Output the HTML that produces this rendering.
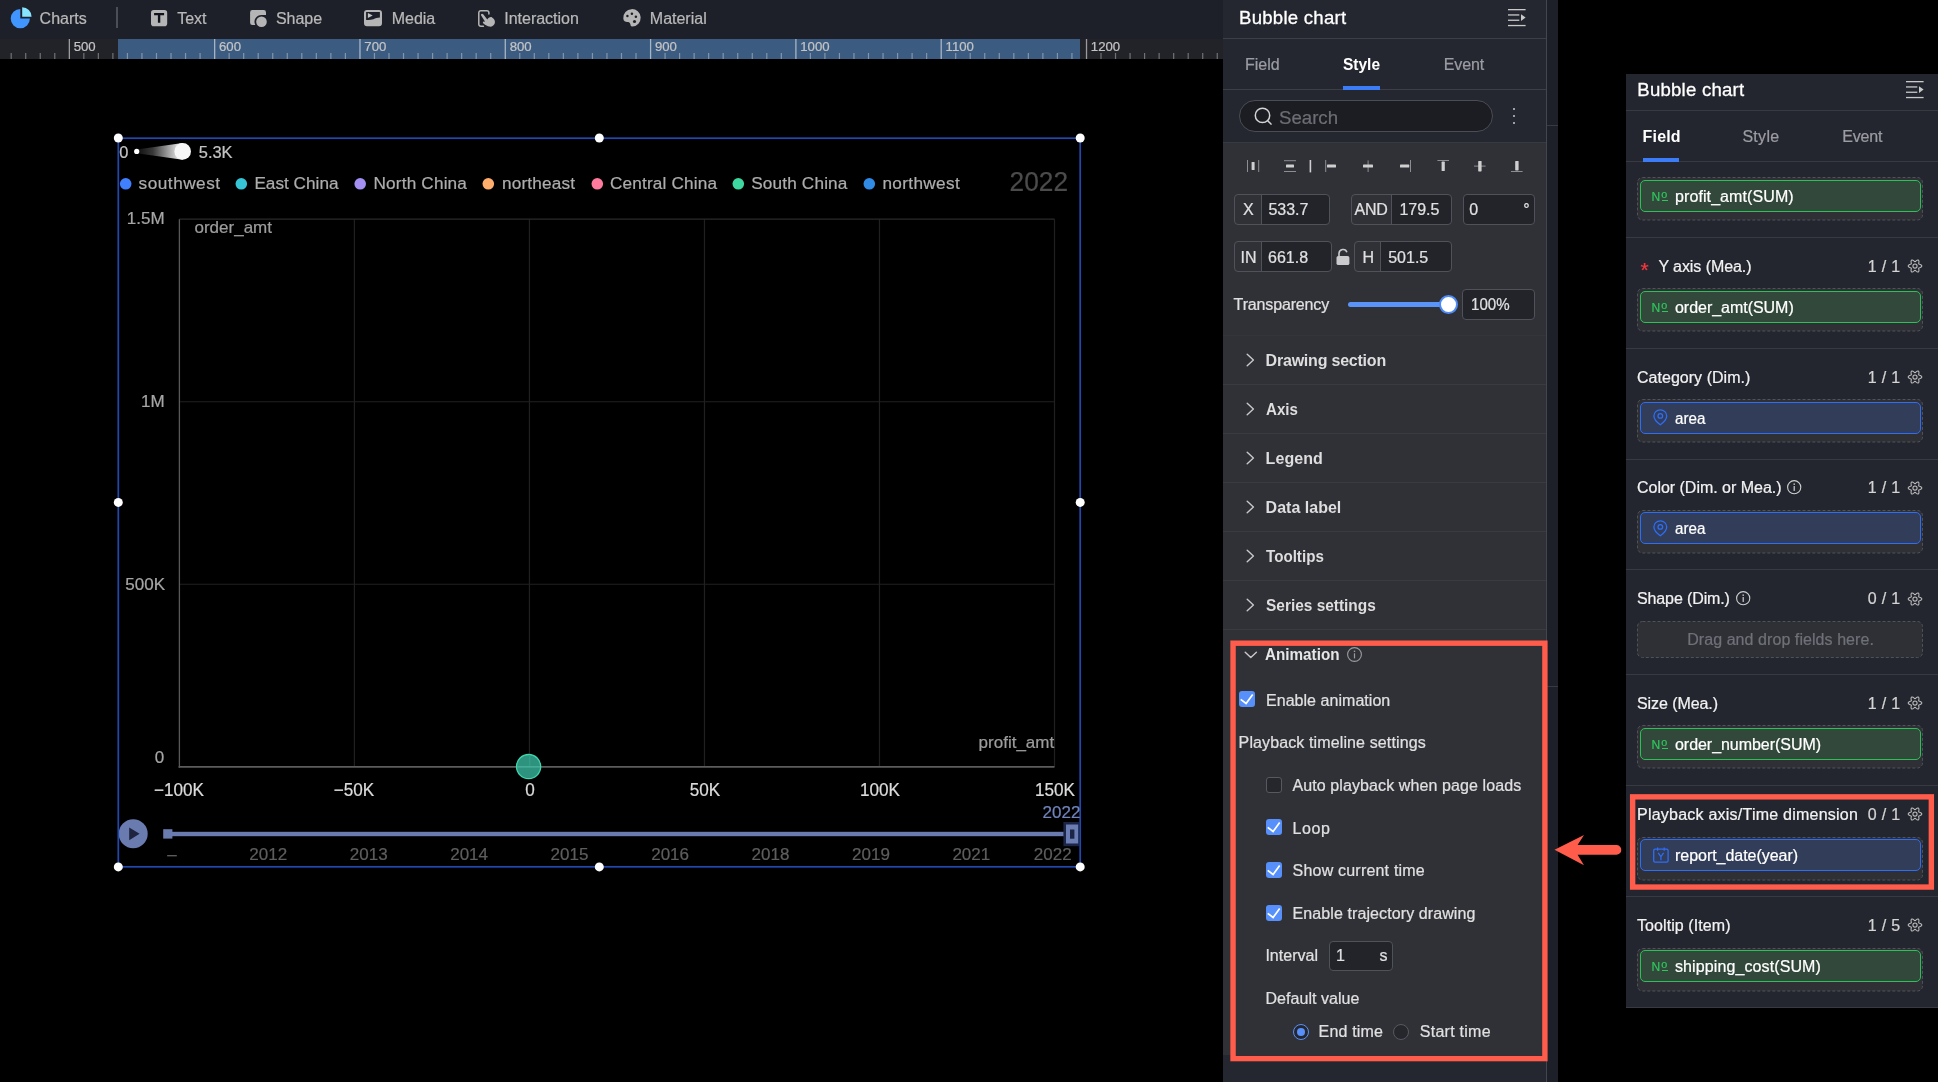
<!DOCTYPE html>
<html><head><meta charset="utf-8"><title>Bubble chart</title>
<style>
html,body{margin:0;padding:0;background:#000;}
body{width:1938px;height:1082px;position:relative;overflow:hidden;font-family:"Liberation Sans",sans-serif;}
.a{position:absolute;box-sizing:border-box;}
.t{position:absolute;line-height:1;white-space:nowrap;-webkit-text-stroke-width:.22px;}
svg{overflow:visible;}
#root{position:absolute;left:0;top:0;width:1938px;height:1082px;will-change:transform;}
</style></head><body><div id="root">
<div class="a" style="left:0.00px;top:0.00px;width:1223.00px;height:39.00px;background:#1e2029;"></div>
<svg class="a" style="left:9.00px;top:6.00px;" width="24" height="24" viewBox="0 0 24 24"><path d="M11.3 3.0 A9.6 9.6 0 1 0 20.9 12.6 L11.3 12.6 Z" fill="#4095ff"/>
<path d="M13.2 1.3 A9.4 9.4 0 0 1 22.6 10.7 L13.2 10.7 Z" fill="#86e4ff"/></svg>
<span class="t" style="top:11.00px;font-size:16px;color:#b9b9b9;left:39.60px;">Charts</span>
<div class="a" style="left:116.00px;top:7.00px;width:2.00px;height:21.00px;background:#4c4e56;"></div>
<svg class="a" style="left:150.80px;top:9.90px;" width="16.2" height="16.2" viewBox="0 0 16.2 16.2"><rect x="0" y="0" width="16.2" height="16.2" rx="2.8" fill="#b5b5b5"/>
<path d="M3.1 3.1H13.1V5.2H9.3V12.8H6.9V5.2H3.1Z" fill="#10131b"/></svg>
<span class="t" style="top:11.00px;font-size:16px;color:#b9b9b9;left:177.20px;">Text</span>
<svg class="a" style="left:249.50px;top:9.50px;" width="18" height="18" viewBox="0 0 18 18"><path d="M2.4 0.1H13.7A2.3 2.3 0 0 1 16 2.4V4.9H11.9A7 7 0 0 0 5.3 15.1H2.4A2.3 2.3 0 0 1 0.1 12.8V2.4A2.3 2.3 0 0 1 2.4 0.1Z" fill="#b5b5b5"/>
<circle cx="11.5" cy="11.75" r="5.3" fill="#b5b5b5"/></svg>
<span class="t" style="top:11.00px;font-size:16px;color:#b9b9b9;left:275.90px;">Shape</span>
<svg class="a" style="left:364.00px;top:9.90px;" width="18" height="16.2" viewBox="0 0 18 16.2"><path fill-rule="evenodd" d="M3 0H15A3 3 0 0 1 18 3V13.2A3 3 0 0 1 15 16.2H3A3 3 0 0 1 0 13.2V3A3 3 0 0 1 3 0ZM2.1 2.1H15.9V7.6C13.4 7.6 11.4 8.4 9.4 9.2C7.2 10 4.4 10.1 2.1 9.9Z" fill="#b5b5b5"/>
<path d="M3.9 3.0L8.7 5.6L3.9 8.1Z" fill="#c4c4c4"/></svg>
<span class="t" style="top:11.00px;font-size:16px;color:#b9b9b9;left:391.70px;">Media</span>
<svg class="a" style="left:478.00px;top:9.50px;" width="18" height="18" viewBox="0 0 18 18"><path d="M10.9 4.1V2.7A2 2 0 0 0 8.9 0.75H2.8A2 2 0 0 0 0.8 2.75V14.2A2 2 0 0 0 2.8 16.2H5.4" fill="none" stroke="#b5b5b5" stroke-width="1.5" stroke-linecap="round"/>
<path d="M3.0 5.3C2.5 4.0 4.2 3.0 5.2 4.2L9.3 9.5C10.3 7.6 12.5 6.6 14.1 7.4C16.5 8.6 17.5 11.4 16.7 13.6C15.9 16.0 13.5 17.0 11.3 16.6C9.6 16.3 7.6 15.1 5.4 13.4C4.4 12.6 4.8 11.5 5.8 11.5L7.1 11.7Z" fill="#b5b5b5"/></svg>
<span class="t" style="top:11.00px;font-size:16px;color:#b9b9b9;left:504.20px;">Interaction</span>
<svg class="a" style="left:623.00px;top:9.00px;" width="18" height="18" viewBox="0 0 18 18"><path d="M0.3 9.4A8.7 8.7 0 1 1 9.4 17.5C7.6 17.6 7.6 16.4 7.4 15.2C7.1 13.4 5.8 12.9 4.2 12.9C2.4 12.9 0.5 12.2 0.3 9.4Z" fill="#b5b5b5"/>
<circle cx="4.4" cy="7.0" r="1.2" fill="#1e2029"/><circle cx="8.9" cy="4.7" r="1.25" fill="#1e2029"/><circle cx="12.9" cy="7.7" r="1.25" fill="#1e2029"/><circle cx="11.5" cy="12.5" r="1.55" fill="#1e2029"/></svg>
<span class="t" style="top:11.00px;font-size:16px;color:#b9b9b9;left:649.80px;">Material</span>
<div class="a" style="left:0.00px;top:39.00px;width:1223.00px;height:20.00px;background:#222328;"></div>
<div class="a" style="left:118.00px;top:39.00px;width:962.00px;height:20.00px;background:#3b5b80;"></div>
<svg class="a" style="left:0.00px;top:39.00px;" width="1223" height="20" viewBox="0 0 1223 20"><rect x="10.58" y="14" width="1.2" height="6" fill="#fff" fill-opacity=".36"/><rect x="25.11" y="14" width="1.2" height="6" fill="#fff" fill-opacity=".36"/><rect x="39.64" y="14" width="1.2" height="6" fill="#fff" fill-opacity=".36"/><rect x="54.17" y="14" width="1.2" height="6" fill="#fff" fill-opacity=".36"/><rect x="68.70" y="0" width="1.3" height="20" fill="#fff" fill-opacity=".55"/><rect x="83.23" y="14" width="1.2" height="6" fill="#fff" fill-opacity=".36"/><rect x="97.76" y="14" width="1.2" height="6" fill="#fff" fill-opacity=".36"/><rect x="112.29" y="14" width="1.2" height="6" fill="#fff" fill-opacity=".36"/><rect x="126.82" y="14" width="1.2" height="6" fill="#fff" fill-opacity=".36"/><rect x="141.35" y="14" width="1.2" height="6" fill="#fff" fill-opacity=".36"/><rect x="155.89" y="14" width="1.2" height="6" fill="#fff" fill-opacity=".36"/><rect x="170.42" y="14" width="1.2" height="6" fill="#fff" fill-opacity=".36"/><rect x="184.95" y="14" width="1.2" height="6" fill="#fff" fill-opacity=".36"/><rect x="199.48" y="14" width="1.2" height="6" fill="#fff" fill-opacity=".36"/><rect x="214.01" y="0" width="1.3" height="20" fill="#fff" fill-opacity=".55"/><rect x="228.54" y="14" width="1.2" height="6" fill="#fff" fill-opacity=".36"/><rect x="243.07" y="14" width="1.2" height="6" fill="#fff" fill-opacity=".36"/><rect x="257.60" y="14" width="1.2" height="6" fill="#fff" fill-opacity=".36"/><rect x="272.13" y="14" width="1.2" height="6" fill="#fff" fill-opacity=".36"/><rect x="286.66" y="14" width="1.2" height="6" fill="#fff" fill-opacity=".36"/><rect x="301.20" y="14" width="1.2" height="6" fill="#fff" fill-opacity=".36"/><rect x="315.73" y="14" width="1.2" height="6" fill="#fff" fill-opacity=".36"/><rect x="330.26" y="14" width="1.2" height="6" fill="#fff" fill-opacity=".36"/><rect x="344.79" y="14" width="1.2" height="6" fill="#fff" fill-opacity=".36"/><rect x="359.32" y="0" width="1.3" height="20" fill="#fff" fill-opacity=".55"/><rect x="373.85" y="14" width="1.2" height="6" fill="#fff" fill-opacity=".36"/><rect x="388.38" y="14" width="1.2" height="6" fill="#fff" fill-opacity=".36"/><rect x="402.91" y="14" width="1.2" height="6" fill="#fff" fill-opacity=".36"/><rect x="417.44" y="14" width="1.2" height="6" fill="#fff" fill-opacity=".36"/><rect x="431.97" y="14" width="1.2" height="6" fill="#fff" fill-opacity=".36"/><rect x="446.51" y="14" width="1.2" height="6" fill="#fff" fill-opacity=".36"/><rect x="461.04" y="14" width="1.2" height="6" fill="#fff" fill-opacity=".36"/><rect x="475.57" y="14" width="1.2" height="6" fill="#fff" fill-opacity=".36"/><rect x="490.10" y="14" width="1.2" height="6" fill="#fff" fill-opacity=".36"/><rect x="504.63" y="0" width="1.3" height="20" fill="#fff" fill-opacity=".55"/><rect x="519.16" y="14" width="1.2" height="6" fill="#fff" fill-opacity=".36"/><rect x="533.69" y="14" width="1.2" height="6" fill="#fff" fill-opacity=".36"/><rect x="548.22" y="14" width="1.2" height="6" fill="#fff" fill-opacity=".36"/><rect x="562.75" y="14" width="1.2" height="6" fill="#fff" fill-opacity=".36"/><rect x="577.28" y="14" width="1.2" height="6" fill="#fff" fill-opacity=".36"/><rect x="591.82" y="14" width="1.2" height="6" fill="#fff" fill-opacity=".36"/><rect x="606.35" y="14" width="1.2" height="6" fill="#fff" fill-opacity=".36"/><rect x="620.88" y="14" width="1.2" height="6" fill="#fff" fill-opacity=".36"/><rect x="635.41" y="14" width="1.2" height="6" fill="#fff" fill-opacity=".36"/><rect x="649.94" y="0" width="1.3" height="20" fill="#fff" fill-opacity=".55"/><rect x="664.47" y="14" width="1.2" height="6" fill="#fff" fill-opacity=".36"/><rect x="679.00" y="14" width="1.2" height="6" fill="#fff" fill-opacity=".36"/><rect x="693.53" y="14" width="1.2" height="6" fill="#fff" fill-opacity=".36"/><rect x="708.06" y="14" width="1.2" height="6" fill="#fff" fill-opacity=".36"/><rect x="722.59" y="14" width="1.2" height="6" fill="#fff" fill-opacity=".36"/><rect x="737.13" y="14" width="1.2" height="6" fill="#fff" fill-opacity=".36"/><rect x="751.66" y="14" width="1.2" height="6" fill="#fff" fill-opacity=".36"/><rect x="766.19" y="14" width="1.2" height="6" fill="#fff" fill-opacity=".36"/><rect x="780.72" y="14" width="1.2" height="6" fill="#fff" fill-opacity=".36"/><rect x="795.25" y="0" width="1.3" height="20" fill="#fff" fill-opacity=".55"/><rect x="809.78" y="14" width="1.2" height="6" fill="#fff" fill-opacity=".36"/><rect x="824.31" y="14" width="1.2" height="6" fill="#fff" fill-opacity=".36"/><rect x="838.84" y="14" width="1.2" height="6" fill="#fff" fill-opacity=".36"/><rect x="853.37" y="14" width="1.2" height="6" fill="#fff" fill-opacity=".36"/><rect x="867.90" y="14" width="1.2" height="6" fill="#fff" fill-opacity=".36"/><rect x="882.44" y="14" width="1.2" height="6" fill="#fff" fill-opacity=".36"/><rect x="896.97" y="14" width="1.2" height="6" fill="#fff" fill-opacity=".36"/><rect x="911.50" y="14" width="1.2" height="6" fill="#fff" fill-opacity=".36"/><rect x="926.03" y="14" width="1.2" height="6" fill="#fff" fill-opacity=".36"/><rect x="940.56" y="0" width="1.3" height="20" fill="#fff" fill-opacity=".55"/><rect x="955.09" y="14" width="1.2" height="6" fill="#fff" fill-opacity=".36"/><rect x="969.62" y="14" width="1.2" height="6" fill="#fff" fill-opacity=".36"/><rect x="984.15" y="14" width="1.2" height="6" fill="#fff" fill-opacity=".36"/><rect x="998.68" y="14" width="1.2" height="6" fill="#fff" fill-opacity=".36"/><rect x="1013.21" y="14" width="1.2" height="6" fill="#fff" fill-opacity=".36"/><rect x="1027.75" y="14" width="1.2" height="6" fill="#fff" fill-opacity=".36"/><rect x="1042.28" y="14" width="1.2" height="6" fill="#fff" fill-opacity=".36"/><rect x="1056.81" y="14" width="1.2" height="6" fill="#fff" fill-opacity=".36"/><rect x="1071.34" y="14" width="1.2" height="6" fill="#fff" fill-opacity=".36"/><rect x="1085.87" y="0" width="1.3" height="20" fill="#fff" fill-opacity=".55"/><rect x="1100.40" y="14" width="1.2" height="6" fill="#fff" fill-opacity=".36"/><rect x="1114.93" y="14" width="1.2" height="6" fill="#fff" fill-opacity=".36"/><rect x="1129.46" y="14" width="1.2" height="6" fill="#fff" fill-opacity=".36"/><rect x="1143.99" y="14" width="1.2" height="6" fill="#fff" fill-opacity=".36"/><rect x="1158.53" y="14" width="1.2" height="6" fill="#fff" fill-opacity=".36"/><rect x="1173.06" y="14" width="1.2" height="6" fill="#fff" fill-opacity=".36"/><rect x="1187.59" y="14" width="1.2" height="6" fill="#fff" fill-opacity=".36"/><rect x="1202.12" y="14" width="1.2" height="6" fill="#fff" fill-opacity=".36"/><rect x="1216.65" y="14" width="1.2" height="6" fill="#fff" fill-opacity=".36"/></svg>
<span class="t" style="top:40.00px;font-size:13.2px;color:#c4c4c4;left:73.70px;">500</span>
<span class="t" style="top:40.00px;font-size:13.2px;color:#c4c4c4;left:219.01px;">600</span>
<span class="t" style="top:40.00px;font-size:13.2px;color:#c4c4c4;left:364.32px;">700</span>
<span class="t" style="top:40.00px;font-size:13.2px;color:#c4c4c4;left:509.63px;">800</span>
<span class="t" style="top:40.00px;font-size:13.2px;color:#c4c4c4;left:654.94px;">900</span>
<span class="t" style="top:40.00px;font-size:13.2px;color:#c4c4c4;left:800.25px;">1000</span>
<span class="t" style="top:40.00px;font-size:13.2px;color:#c4c4c4;left:945.56px;">1100</span>
<span class="t" style="top:40.00px;font-size:13.2px;color:#c4c4c4;left:1090.87px;">1200</span>
<svg class="a" style="left:0.00px;top:0.00px;" width="1223" height="1082" viewBox="0 0 1223 1082"><line x1="354.42" y1="219.2" x2="354.42" y2="766.8" stroke="#202020" stroke-width="1.2"/><line x1="529.44" y1="219.2" x2="529.44" y2="766.8" stroke="#202020" stroke-width="1.2"/><line x1="704.46" y1="219.2" x2="704.46" y2="766.8" stroke="#202020" stroke-width="1.2"/><line x1="879.48" y1="219.2" x2="879.48" y2="766.8" stroke="#202020" stroke-width="1.2"/><line x1="1054.50" y1="219.2" x2="1054.50" y2="766.8" stroke="#202020" stroke-width="1.2"/><line x1="179.4" y1="219.20" x2="1054.5" y2="219.20" stroke="#2a2a2a" stroke-width="1.2"/><line x1="179.4" y1="401.73" x2="1054.5" y2="401.73" stroke="#212121" stroke-width="1.2"/><line x1="179.4" y1="584.27" x2="1054.5" y2="584.27" stroke="#212121" stroke-width="1.2"/><line x1="179.4" y1="219.2" x2="179.4" y2="767.8" stroke="#585858" stroke-width="1.3"/><line x1="178.6" y1="766.8" x2="1054.5" y2="766.8" stroke="#5c5c5c" stroke-width="1.8"/><circle cx="528.6" cy="766.6" r="12.1" fill="#2e9782" fill-opacity=".97" stroke="#3fd6ad" stroke-width="1.3"/><line x1="517" y1="766.8" x2="540" y2="766.8" stroke="#45ad97" stroke-width="1.6"/><line x1="529.7" y1="755" x2="529.7" y2="766" stroke="#33a08a" stroke-width="1.2"/><defs><linearGradient id="wg" x1="0" x2="1" y1="0" y2="0"><stop offset="0" stop-color="#fff" stop-opacity=".05"/><stop offset=".35" stop-color="#fff" stop-opacity=".22"/><stop offset="1" stop-color="#fff" stop-opacity="1"/></linearGradient></defs>
<path d="M136.7 149.6L182.7 143.1V159.7L136.7 153.2Z" fill="url(#wg)"/>
<circle cx="136.7" cy="151.4" r="2.6" fill="#fff"/><circle cx="182.7" cy="151.4" r="8.3" fill="#f7f7f7"/><circle cx="125.7" cy="183.8" r="5.8" fill="#4080ff"/><circle cx="241.3" cy="183.8" r="5.8" fill="#36c5d6"/><circle cx="360.2" cy="183.8" r="5.8" fill="#a48ff2"/><circle cx="488.3" cy="183.8" r="5.8" fill="#ffae6b"/><circle cx="597.3" cy="183.8" r="5.8" fill="#ff7a9c"/><circle cx="738.3" cy="183.8" r="5.8" fill="#3dd8a0"/><circle cx="869.3" cy="183.8" r="5.8" fill="#2f8be6"/><circle cx="133.2" cy="833.8" r="14.5" fill="#6a7bb0"/><path d="M129.2 827.4L139.6 833.8L129.2 840.2Z" fill="#1f2540"/><rect x="163.2" y="829.2" width="9.2" height="9.4" fill="#6a7bb0"/><rect x="171" y="831.8" width="894" height="4.4" fill="#6a7bb0"/><rect x="1063.4" y="822" width="15.8" height="24.2" fill="#1c2545"/><rect x="1066" y="824.5" width="12.2" height="19" fill="#6b7db2"/><rect x="1070" y="829.5" width="4.4" height="9.2" fill="#1c2545"/><rect x="118.3" y="138.2" width="961.9" height="728.6" fill="none" stroke="#2149ad" stroke-width="1.7"/><circle cx="118.3" cy="138" r="4.5" fill="#fff"/><circle cx="599.3" cy="138" r="4.5" fill="#fff"/><circle cx="1080.2" cy="138" r="4.5" fill="#fff"/><circle cx="118.3" cy="502.4" r="4.5" fill="#fff"/><circle cx="1080.2" cy="502.4" r="4.5" fill="#fff"/><circle cx="118.3" cy="866.9" r="4.5" fill="#fff"/><circle cx="599.3" cy="866.9" r="4.5" fill="#fff"/><circle cx="1080.2" cy="866.9" r="4.5" fill="#fff"/></svg>
<span class="t" style="top:144.00px;font-size:16.4px;color:#c4c4c4;left:119.30px;">0</span>
<span class="t" style="top:144.00px;font-size:16.4px;color:#c4c4c4;left:198.80px;">5.3K</span>
<span class="t" style="top:175.00px;font-size:17.2px;color:#adadad;left:138.60px;letter-spacing:0.512px;">southwest</span>
<span class="t" style="top:175.00px;font-size:17.2px;color:#adadad;left:254.40px;letter-spacing:0.011px;">East China</span>
<span class="t" style="top:175.00px;font-size:17.2px;color:#adadad;left:373.50px;letter-spacing:0.17px;">North China</span>
<span class="t" style="top:175.00px;font-size:17.2px;color:#adadad;left:501.90px;letter-spacing:0.188px;">northeast</span>
<span class="t" style="top:175.00px;font-size:17.2px;color:#adadad;left:610.00px;letter-spacing:0.167px;">Central China</span>
<span class="t" style="top:175.00px;font-size:17.2px;color:#adadad;left:751.20px;letter-spacing:0.16px;">South China</span>
<span class="t" style="top:175.00px;font-size:17.2px;color:#adadad;left:882.40px;letter-spacing:0.35px;">northwest</span>
<span class="t" style="top:169.00px;font-size:27px;color:#4b4b4b;right:870.10px;transform:scaleX(0.9741);transform-origin:right center;">2022</span>
<span class="t" style="top:210.00px;font-size:17px;color:#a6a6a6;right:1773.40px;">1.5M</span>
<span class="t" style="top:393.00px;font-size:17px;color:#a6a6a6;right:1773.40px;">1M</span>
<span class="t" style="top:576.00px;font-size:17px;color:#a6a6a6;right:1773.00px;">500K</span>
<span class="t" style="top:749.00px;font-size:17px;color:#a6a6a6;right:1773.80px;">0</span>
<span class="t" style="top:219.00px;font-size:17px;color:#9d9d9d;left:194.50px;">order_amt</span>
<span class="t" style="top:734.00px;font-size:17px;color:#9d9d9d;right:883.80px;">profit_amt</span>
<span class="t" style="top:781.00px;font-size:18px;color:#dcdcdc;left:179.40px;transform:translateX(-50%);transform:translateX(-50%) scaleX(.95);">−100K</span>
<span class="t" style="top:781.00px;font-size:18px;color:#dcdcdc;left:354.40px;transform:translateX(-50%);transform:translateX(-50%) scaleX(.95);">−50K</span>
<span class="t" style="top:781.00px;font-size:18px;color:#dcdcdc;left:529.60px;transform:translateX(-50%);transform:translateX(-50%) scaleX(.95);">0</span>
<span class="t" style="top:781.00px;font-size:18px;color:#dcdcdc;left:704.60px;transform:translateX(-50%);transform:translateX(-50%) scaleX(.95);">50K</span>
<span class="t" style="top:781.00px;font-size:18px;color:#dcdcdc;left:879.60px;transform:translateX(-50%);transform:translateX(-50%) scaleX(.95);">100K</span>
<span class="t" style="top:781.00px;font-size:18px;color:#dcdcdc;left:1055.20px;transform:translateX(-50%);transform:translateX(-50%) scaleX(.95);">150K</span>
<span class="t" style="top:804.00px;font-size:17px;color:#7184bd;right:857.60px;">2022</span>
<span class="t" style="top:846.00px;font-size:17px;color:#5e5e5e;left:172.00px;transform:translateX(-50%);">–</span>
<span class="t" style="top:846.00px;font-size:17px;color:#5e5e5e;left:268.20px;transform:translateX(-50%);">2012</span>
<span class="t" style="top:846.00px;font-size:17px;color:#5e5e5e;left:368.70px;transform:translateX(-50%);">2013</span>
<span class="t" style="top:846.00px;font-size:17px;color:#5e5e5e;left:469.10px;transform:translateX(-50%);">2014</span>
<span class="t" style="top:846.00px;font-size:17px;color:#5e5e5e;left:569.50px;transform:translateX(-50%);">2015</span>
<span class="t" style="top:846.00px;font-size:17px;color:#5e5e5e;left:670.10px;transform:translateX(-50%);">2016</span>
<span class="t" style="top:846.00px;font-size:17px;color:#5e5e5e;left:770.50px;transform:translateX(-50%);">2018</span>
<span class="t" style="top:846.00px;font-size:17px;color:#5e5e5e;left:871.00px;transform:translateX(-50%);">2019</span>
<span class="t" style="top:846.00px;font-size:17px;color:#5e5e5e;left:971.30px;transform:translateX(-50%);">2021</span>
<span class="t" style="top:846.00px;font-size:17px;color:#5e5e5e;right:866.40px;">2022</span>
<div class="a" style="left:1223.00px;top:0.00px;width:324.00px;height:142.00px;background:#252730;"></div>
<div class="a" style="left:1223.00px;top:142.00px;width:324.00px;height:913.00px;background:#303137;"></div>
<div class="a" style="left:1223.00px;top:1055.00px;width:324.00px;height:27.00px;background:#252730;"></div>
<div class="a" style="left:1547.00px;top:0.00px;width:11.00px;height:1082.00px;background:#1e2029;"></div>
<div class="a" style="left:1547.00px;top:125.00px;width:11.00px;height:1.00px;background:#383a42;"></div>
<div class="a" style="left:1547.00px;top:686.00px;width:11.00px;height:1.00px;background:#383a42;"></div>
<div class="a" style="left:1223.00px;top:38.00px;width:324.00px;height:1.00px;background:#3d3f47;"></div>
<div class="a" style="left:1223.00px;top:89.00px;width:324.00px;height:1.00px;background:#3d3f47;"></div>
<div class="a" style="left:1223.00px;top:141.50px;width:324.00px;height:1.00px;background:#383a41;"></div>
<div class="a" style="left:1546.00px;top:0.00px;width:1.00px;height:1082.00px;background:#44464e;"></div>
<span class="t" style="top:9.00px;font-size:18.6px;color:#fff;left:1239.00px;letter-spacing:0.245px;-webkit-text-stroke:.3px #fff;">Bubble chart</span>
<svg class="a" style="left:1508.00px;top:9.10px;" width="18" height="18" viewBox="0 0 18 18"><g fill="#c9c9c9"><rect x="0" y="0" width="17.6" height="1.3"/><rect x="0" y="5.3" width="11.3" height="1.3"/><rect x="0" y="10.6" width="11.3" height="1.3"/><rect x="0" y="15.9" width="17.6" height="1.3"/><path d="M13 5.2L17.6 8.6L13 12Z"/></g></svg>
<span class="t" style="top:57.00px;font-size:16px;color:#9c9da3;left:1245.00px;letter-spacing:0.0px;">Field</span>
<span class="t" style="top:57.00px;font-size:16px;color:#fff;left:1342.60px;font-weight:bold;-webkit-text-stroke-width:0;transform:scaleX(0.9684);transform-origin:left center;">Style</span>
<span class="t" style="top:57.00px;font-size:16px;color:#9c9da3;left:1443.80px;letter-spacing:-0.125px;">Event</span>
<div class="a" style="left:1343.00px;top:86.00px;width:37.00px;height:4.00px;background:#3c7cf6;"></div>
<div class="a" style="left:1239.00px;top:100.00px;width:254.00px;height:32.00px;background:#1c1d23;border:1px solid #4b4d55;border-radius:16px;"></div>
<svg class="a" style="left:1253.50px;top:106.80px;" width="18" height="18" viewBox="0 0 18 18"><circle cx="8.5" cy="8.4" r="7.2" fill="none" stroke="#d4d4d4" stroke-width="1.5"/><path d="M13.7 13.7L17.0 17.1" stroke="#d4d4d4" stroke-width="1.5" stroke-linecap="round"/></svg>
<span class="t" style="top:108.00px;font-size:19.2px;color:#6c6e75;left:1279.00px;transform:scaleX(0.9712);transform-origin:left center;">Search</span>
<div class="a" style="left:1512.60px;top:107.90px;width:2.20px;height:2.20px;background:#c9c9c9;border-radius:50%;"></div>
<div class="a" style="left:1512.60px;top:114.90px;width:2.20px;height:2.20px;background:#c9c9c9;border-radius:50%;"></div>
<div class="a" style="left:1512.60px;top:121.90px;width:2.20px;height:2.20px;background:#c9c9c9;border-radius:50%;"></div>
<svg class="a" style="left:0.00px;top:0.00px;" width="1938" height="200" viewBox="0 0 1938 200"><rect x="1247" y="160" width="1" height="12" fill="#8d8e93"/><rect x="1258.2" y="160" width="1" height="12" fill="#8d8e93"/><rect x="1251.6" y="162" width="3" height="8" rx=".6" fill="#cfcfcf"/><rect x="1284" y="160.2" width="12" height="1" fill="#8d8e93"/><rect x="1284" y="171" width="12" height="1" fill="#8d8e93"/><rect x="1286" y="164.6" width="8" height="3" rx=".6" fill="#cfcfcf"/><rect x="1309.6" y="160" width="1.6" height="12.4" fill="#cfcfcf"/><rect x="1325.2" y="160" width="1" height="12" fill="#8d8e93"/><rect x="1327" y="164.6" width="9" height="3" rx=".6" fill="#cfcfcf"/><rect x="1367.6" y="160.4" width="1" height="11.6" fill="#8d8e93"/><rect x="1363" y="164.6" width="10" height="3" rx=".6" fill="#cfcfcf"/><rect x="1410" y="160" width="1" height="12" fill="#8d8e93"/><rect x="1400" y="164.6" width="9.2" height="3" rx=".6" fill="#cfcfcf"/><rect x="1437.4" y="160" width="11.6" height="1" fill="#8d8e93"/><rect x="1441.6" y="161.6" width="3.2" height="9.4" rx=".6" fill="#cfcfcf"/><rect x="1474" y="165.6" width="11.6" height="1" fill="#8d8e93"/><rect x="1478.2" y="161" width="3.4" height="10.4" rx=".6" fill="#cfcfcf"/><rect x="1511" y="171" width="11.6" height="1" fill="#8d8e93"/><rect x="1515.2" y="161" width="3.4" height="9.4" rx=".6" fill="#cfcfcf"/></svg>
<div class="a" style="left:1234.00px;top:194.00px;width:96.00px;height:31.00px;border:1px solid #50525a;border-radius:4px;background:linear-gradient(to right,#303137 26.40000000000009px,#50525a 26.40000000000009px,#50525a 27.40000000000009px,#232429 27.40000000000009px);"></div>
<span class="t" style="top:202.00px;font-size:16px;color:#e0e0e0;left:1243.00px;">X</span>
<span class="t" style="top:202.00px;font-size:16px;color:#e0e0e0;left:1268.40px;">533.7</span>
<div class="a" style="left:1351.00px;top:194.00px;width:101.00px;height:31.00px;border:1px solid #50525a;border-radius:4px;background:linear-gradient(to right,#303137 38.799999999999955px,#50525a 38.799999999999955px,#50525a 39.799999999999955px,#232429 39.799999999999955px);"></div>
<span class="t" style="top:202.00px;font-size:16px;color:#e0e0e0;left:1354.60px;letter-spacing:-0.3px;">AND</span>
<span class="t" style="top:202.00px;font-size:16px;color:#e0e0e0;left:1399.40px;">179.5</span>
<div class="a" style="left:1463.00px;top:194.00px;width:72.00px;height:31.00px;background:#232429;border:1px solid #50525a;border-radius:4px;"></div>
<span class="t" style="top:202.00px;font-size:16px;color:#e0e0e0;left:1469.20px;">0</span>
<span class="t" style="top:202.00px;font-size:16px;color:#e0e0e0;left:1523.20px;">°</span>
<div class="a" style="left:1234.00px;top:241.00px;width:98.00px;height:31.00px;border:1px solid #50525a;border-radius:4px;background:linear-gradient(to right,#303137 25.799999999999955px,#50525a 25.799999999999955px,#50525a 26.799999999999955px,#232429 26.799999999999955px);"></div>
<span class="t" style="top:250.00px;font-size:16px;color:#e0e0e0;left:1240.60px;">IN</span>
<span class="t" style="top:250.00px;font-size:16px;color:#e0e0e0;left:1268.00px;">661.8</span>
<svg class="a" style="left:1336.00px;top:248.00px;" width="15" height="18" viewBox="0 0 15 18"><rect x="0.5" y="7.9" width="12.9" height="9.2" rx="1.9" fill="#cbcbcd"/><path d="M3.0 8.2V5.3A4.05 4.05 0 0 1 10.9 4.3" fill="none" stroke="#cbcbcd" stroke-width="1.6" stroke-linecap="butt"/></svg>
<div class="a" style="left:1354.00px;top:241.00px;width:98.00px;height:31.00px;border:1px solid #50525a;border-radius:4px;background:linear-gradient(to right,#303137 24.799999999999955px,#50525a 24.799999999999955px,#50525a 25.799999999999955px,#232429 25.799999999999955px);"></div>
<span class="t" style="top:250.00px;font-size:16px;color:#e0e0e0;left:1362.40px;">H</span>
<span class="t" style="top:250.00px;font-size:16px;color:#e0e0e0;left:1388.20px;">501.5</span>
<span class="t" style="top:297.00px;font-size:16px;color:#e0e0e0;left:1233.60px;letter-spacing:-0.145px;">Transparency</span>
<div class="a" style="left:1348.00px;top:302.20px;width:98.00px;height:5.00px;background:#5b94f8;border-radius:2.5px;"></div>
<div class="a" style="left:1439.40px;top:295.20px;width:18.80px;height:18.80px;background:#fff;border:2px solid #4d8af5;border-radius:50%;"></div>
<div class="a" style="left:1462.00px;top:289.00px;width:73.00px;height:31.00px;background:#232429;border:1px solid #50525a;border-radius:4px;"></div>
<span class="t" style="top:297.00px;font-size:16px;color:#e0e0e0;left:1470.60px;transform:scaleX(0.9425);transform-origin:left center;">100%</span>
<div class="a" style="left:1223.00px;top:335.00px;width:323.00px;height:1.00px;background:#34353c;"></div>
<svg class="a" style="left:1246.00px;top:353.40px;" width="10" height="14" viewBox="0 0 10 14"><path d="M1.2 1.2L7.4 7L1.2 12.8" fill="none" stroke="#c9c9c9" stroke-width="1.4" stroke-linecap="round" stroke-linejoin="round"/></svg>
<span class="t" style="top:353.00px;font-size:16px;color:#dedede;left:1265.60px;font-weight:bold;-webkit-text-stroke-width:0;letter-spacing:-0.214px;">Drawing section</span>
<div class="a" style="left:1223.00px;top:384.00px;width:323.00px;height:1.00px;background:#3a3b42;"></div>
<svg class="a" style="left:1246.00px;top:402.40px;" width="10" height="14" viewBox="0 0 10 14"><path d="M1.2 1.2L7.4 7L1.2 12.8" fill="none" stroke="#c9c9c9" stroke-width="1.4" stroke-linecap="round" stroke-linejoin="round"/></svg>
<span class="t" style="top:402.00px;font-size:16px;color:#dedede;left:1265.60px;font-weight:bold;-webkit-text-stroke-width:0;transform:scaleX(0.9424);transform-origin:left center;">Axis</span>
<div class="a" style="left:1223.00px;top:433.00px;width:323.00px;height:1.00px;background:#3a3b42;"></div>
<svg class="a" style="left:1246.00px;top:451.40px;" width="10" height="14" viewBox="0 0 10 14"><path d="M1.2 1.2L7.4 7L1.2 12.8" fill="none" stroke="#c9c9c9" stroke-width="1.4" stroke-linecap="round" stroke-linejoin="round"/></svg>
<span class="t" style="top:451.00px;font-size:16px;color:#dedede;left:1265.60px;font-weight:bold;-webkit-text-stroke-width:0;letter-spacing:0.06px;">Legend</span>
<div class="a" style="left:1223.00px;top:482.00px;width:323.00px;height:1.00px;background:#3a3b42;"></div>
<svg class="a" style="left:1246.00px;top:500.40px;" width="10" height="14" viewBox="0 0 10 14"><path d="M1.2 1.2L7.4 7L1.2 12.8" fill="none" stroke="#c9c9c9" stroke-width="1.4" stroke-linecap="round" stroke-linejoin="round"/></svg>
<span class="t" style="top:500.00px;font-size:16px;color:#dedede;left:1265.60px;font-weight:bold;-webkit-text-stroke-width:0;letter-spacing:0.011px;">Data label</span>
<div class="a" style="left:1223.00px;top:531.00px;width:323.00px;height:1.00px;background:#3a3b42;"></div>
<svg class="a" style="left:1246.00px;top:549.40px;" width="10" height="14" viewBox="0 0 10 14"><path d="M1.2 1.2L7.4 7L1.2 12.8" fill="none" stroke="#c9c9c9" stroke-width="1.4" stroke-linecap="round" stroke-linejoin="round"/></svg>
<span class="t" style="top:549.00px;font-size:16px;color:#dedede;left:1265.60px;font-weight:bold;-webkit-text-stroke-width:0;transform:scaleX(0.9475);transform-origin:left center;">Tooltips</span>
<div class="a" style="left:1223.00px;top:580.00px;width:323.00px;height:1.00px;background:#3a3b42;"></div>
<svg class="a" style="left:1246.00px;top:598.40px;" width="10" height="14" viewBox="0 0 10 14"><path d="M1.2 1.2L7.4 7L1.2 12.8" fill="none" stroke="#c9c9c9" stroke-width="1.4" stroke-linecap="round" stroke-linejoin="round"/></svg>
<span class="t" style="top:598.00px;font-size:16px;color:#dedede;left:1265.60px;font-weight:bold;-webkit-text-stroke-width:0;transform:scaleX(0.9646);transform-origin:left center;">Series settings</span>
<div class="a" style="left:1223.00px;top:629.00px;width:323.00px;height:1.00px;background:#3a3b42;"></div>
<svg class="a" style="left:1243.60px;top:650.60px;" width="14" height="9" viewBox="0 0 14 9"><path d="M1.2 1.2L6.8 6.6L12.4 1.2" fill="none" stroke="#c9c9c9" stroke-width="1.4" stroke-linecap="round" stroke-linejoin="round"/></svg>
<span class="t" style="top:647.00px;font-size:16px;color:#e6e6e6;left:1265.40px;font-weight:bold;-webkit-text-stroke-width:0;transform:scaleX(0.9526);transform-origin:left center;">Animation</span>
<svg class="a" style="left:1347.20px;top:646.60px;" width="15" height="15" viewBox="0 0 15 15"><circle cx="7.5" cy="7.5" r="6.9" fill="none" stroke="#9a9ba0" stroke-width="1.1"/><rect x="6.9" y="6.3" width="1.2" height="5.1000000000000005" fill="#9a9ba0"/><rect x="6.8" y="3.5999999999999996" width="1.4" height="1.4" fill="#9a9ba0"/></svg>
<div class="a" style="left:1239.00px;top:691.00px;width:16.00px;height:16.00px;background:#5790fa;border-radius:3px;"></div>
<svg class="a" style="left:1239.00px;top:691.00px;" width="16" height="16" viewBox="0 0 16 16"><path d="M1.7 8.3L7.1 12.5L13.7 3.5" fill="none" stroke="#fff" stroke-width="1.7" stroke-linecap="butt" stroke-linejoin="miter"/></svg>
<span class="t" style="top:693.00px;font-size:16px;color:#e0e0e0;left:1266.00px;letter-spacing:0.04px;">Enable animation</span>
<span class="t" style="top:735.00px;font-size:16px;color:#e0e0e0;left:1238.60px;letter-spacing:0.12px;">Playback timeline settings</span>
<div class="a" style="left:1266.00px;top:777.00px;width:16.00px;height:16.00px;background:#26272d;border:1px solid #575961;border-radius:3px;"></div>
<span class="t" style="top:778.00px;font-size:16px;color:#e0e0e0;left:1292.40px;letter-spacing:0.104px;">Auto playback when page loads</span>
<div class="a" style="left:1266.00px;top:819.00px;width:16.00px;height:16.00px;background:#5790fa;border-radius:3px;"></div>
<svg class="a" style="left:1266.00px;top:819.00px;" width="16" height="16" viewBox="0 0 16 16"><path d="M1.7 8.3L7.1 12.5L13.7 3.5" fill="none" stroke="#fff" stroke-width="1.7" stroke-linecap="butt" stroke-linejoin="miter"/></svg>
<span class="t" style="top:821.00px;font-size:16px;color:#e0e0e0;left:1292.40px;letter-spacing:0.667px;">Loop</span>
<div class="a" style="left:1266.00px;top:862.00px;width:16.00px;height:16.00px;background:#5790fa;border-radius:3px;"></div>
<svg class="a" style="left:1266.00px;top:862.00px;" width="16" height="16" viewBox="0 0 16 16"><path d="M1.7 8.3L7.1 12.5L13.7 3.5" fill="none" stroke="#fff" stroke-width="1.7" stroke-linecap="butt" stroke-linejoin="miter"/></svg>
<span class="t" style="top:863.00px;font-size:16px;color:#e0e0e0;left:1292.60px;letter-spacing:0.2px;">Show current time</span>
<div class="a" style="left:1266.00px;top:905.00px;width:16.00px;height:16.00px;background:#5790fa;border-radius:3px;"></div>
<svg class="a" style="left:1266.00px;top:905.00px;" width="16" height="16" viewBox="0 0 16 16"><path d="M1.7 8.3L7.1 12.5L13.7 3.5" fill="none" stroke="#fff" stroke-width="1.7" stroke-linecap="butt" stroke-linejoin="miter"/></svg>
<span class="t" style="top:906.00px;font-size:16px;color:#e0e0e0;left:1292.60px;letter-spacing:0.092px;">Enable trajectory drawing</span>
<span class="t" style="top:948.00px;font-size:16px;color:#e0e0e0;left:1265.40px;letter-spacing:0.014px;">Interval</span>
<div class="a" style="left:1329.00px;top:940.50px;width:64.00px;height:30.00px;background:#232429;border:1px solid #50525a;border-radius:4px;"></div>
<span class="t" style="top:948.00px;font-size:16px;color:#e0e0e0;left:1336.00px;">1</span>
<span class="t" style="top:948.00px;font-size:16px;color:#e0e0e0;left:1379.40px;">s</span>
<span class="t" style="top:991.00px;font-size:16px;color:#e0e0e0;left:1265.40px;letter-spacing:0.058px;">Default value</span>
<div class="a" style="left:1292.80px;top:1024.00px;width:16.40px;height:16.40px;background:#26272d;border:1.5px solid #5790fa;border-radius:50%;"></div>
<div class="a" style="left:1296.90px;top:1028.10px;width:8.20px;height:8.20px;background:#5790fa;border-radius:50%;"></div>
<span class="t" style="top:1024.00px;font-size:16px;color:#e0e0e0;left:1318.60px;letter-spacing:0.157px;">End time</span>
<div class="a" style="left:1393.00px;top:1024.00px;width:16.40px;height:16.40px;background:#26272d;border:1px solid #575961;border-radius:50%;"></div>
<span class="t" style="top:1024.00px;font-size:16px;color:#e0e0e0;left:1419.80px;letter-spacing:0.256px;">Start time</span>
<svg class="a" style="left:0.00px;top:0.00px;" width="1938" height="1082" viewBox="0 0 1938 1082"><rect x="1233.05" y="643.2" width="311.85" height="415.4" fill="none" stroke="#ff5c4c" stroke-width="5.4"/></svg>
<div class="a" style="left:1626.00px;top:74.00px;width:312.00px;height:934.00px;background:#24262f;"></div>
<div class="a" style="left:1626.00px;top:110.00px;width:312.00px;height:1.00px;background:#383a42;"></div>
<div class="a" style="left:1626.00px;top:161.00px;width:312.00px;height:1.00px;background:#383a42;"></div>
<span class="t" style="top:81.00px;font-size:18.6px;color:#fff;left:1637.30px;letter-spacing:0.218px;-webkit-text-stroke:.3px #fff;">Bubble chart</span>
<svg class="a" style="left:1905.90px;top:81.00px;" width="18" height="18" viewBox="0 0 18 18"><g fill="#c9c9c9"><rect x="0" y="0" width="17.6" height="1.3"/><rect x="0" y="5.3" width="11.3" height="1.3"/><rect x="0" y="10.6" width="11.3" height="1.3"/><rect x="0" y="15.9" width="17.6" height="1.3"/><path d="M13 5.2L17.6 8.6L13 12Z"/></g></svg>
<span class="t" style="top:129.00px;font-size:16px;color:#fff;left:1642.60px;font-weight:bold;-webkit-text-stroke-width:0;letter-spacing:0.175px;">Field</span>
<span class="t" style="top:129.00px;font-size:16px;color:#9c9da3;left:1742.40px;letter-spacing:0.3px;">Style</span>
<span class="t" style="top:129.00px;font-size:16px;color:#9c9da3;left:1842.20px;letter-spacing:-0.15px;">Event</span>
<div class="a" style="left:1643.00px;top:158.00px;width:36.00px;height:4.00px;background:#3c7cf6;"></div>
<div class="a" style="left:1626.00px;top:237.00px;width:312.00px;height:1.00px;background:#383a42;"></div>
<div class="a" style="left:1626.00px;top:348.00px;width:312.00px;height:1.00px;background:#383a42;"></div>
<div class="a" style="left:1626.00px;top:458.50px;width:312.00px;height:1.00px;background:#383a42;"></div>
<div class="a" style="left:1626.00px;top:569.00px;width:312.00px;height:1.00px;background:#383a42;"></div>
<div class="a" style="left:1626.00px;top:674.00px;width:312.00px;height:1.00px;background:#383a42;"></div>
<div class="a" style="left:1626.00px;top:785.00px;width:312.00px;height:1.00px;background:#383a42;"></div>
<div class="a" style="left:1626.00px;top:896.00px;width:312.00px;height:1.00px;background:#383a42;"></div>
<div class="a" style="left:1626.00px;top:1007.00px;width:312.00px;height:1.00px;background:#383a42;"></div>
<svg class="a" style="left:1637.00px;top:177.00px;" width="286" height="43.5" viewBox="0 0 286 43.5"><rect x=".5" y=".5" width="285" height="42.5" rx="5" fill="#2f3036" stroke="#50525a" stroke-width="1" stroke-dasharray="3 2"/></svg>
<div class="a" style="left:1640.00px;top:180.00px;width:281.00px;height:32.00px;background:#32483b;border:1.2px solid #2cc157;border-radius:5px;"></div>
<span class="t" style="top:191.00px;font-size:12px;color:#2fc65c;left:1651.50px;">N</span>
<span class="t" style="top:189.00px;font-size:10.8px;color:#2fc65c;left:1661.20px;">o</span>
<div class="a" style="left:1661.70px;top:199.70px;width:6.40px;height:1.10px;background:#2fc65c;"></div>
<span class="t" style="top:189.00px;font-size:16px;color:#fff;left:1675.00px;letter-spacing:0.093px;">profit_amt(SUM)</span>
<span class="t" style="top:259.00px;font-size:21px;color:#f2383f;left:1640.60px;">*</span>
<span class="t" style="top:259.00px;font-size:16px;color:#f2f2f2;left:1658.40px;letter-spacing:-0.067px;">Y axis (Mea.)</span>
<span class="t" style="top:259.00px;font-size:16px;color:#d4d4d4;right:37.80px;word-spacing:0.6px;">1 / 1</span>
<svg class="a" style="left:1908.20px;top:259.20px;" width="14" height="14" viewBox="0 0 14 14"><path d="M13.80 7.00L13.61 7.58L13.08 8.07L12.36 8.44L11.63 8.68L11.05 8.89L10.72 9.15L10.66 9.56L10.77 10.17L10.92 10.92L10.97 11.73L10.80 12.43L10.40 12.89L9.80 13.01L9.11 12.80L8.44 12.36L7.86 11.85L7.39 11.45L7.00 11.30L6.61 11.45L6.14 11.85L5.56 12.36L4.89 12.80L4.20 13.01L3.60 12.89L3.20 12.43L3.03 11.73L3.08 10.92L3.23 10.17L3.34 9.56L3.28 9.15L2.95 8.89L2.37 8.68L1.64 8.44L0.92 8.07L0.39 7.58L0.20 7.00L0.39 6.42L0.92 5.93L1.64 5.56L2.37 5.32L2.95 5.11L3.28 4.85L3.34 4.44L3.23 3.83L3.08 3.08L3.03 2.27L3.20 1.57L3.60 1.11L4.20 0.99L4.89 1.20L5.56 1.64L6.14 2.15L6.61 2.55L7.00 2.70L7.39 2.55L7.86 2.15L8.44 1.64L9.11 1.20L9.80 0.99L10.40 1.11L10.80 1.57L10.97 2.27L10.92 3.08L10.77 3.83L10.66 4.44L10.72 4.85L11.05 5.11L11.63 5.32L12.36 5.56L13.08 5.93L13.61 6.42L13.80 7.00Z" fill="none" stroke="#bdbdbd" stroke-width="1.05" stroke-linejoin="round"/><circle cx="7" cy="7" r="2.1" fill="none" stroke="#bdbdbd" stroke-width="1.05"/></svg>
<svg class="a" style="left:1637.00px;top:288.00px;" width="286" height="43.5" viewBox="0 0 286 43.5"><rect x=".5" y=".5" width="285" height="42.5" rx="5" fill="#2f3036" stroke="#50525a" stroke-width="1" stroke-dasharray="3 2"/></svg>
<div class="a" style="left:1640.00px;top:291.00px;width:281.00px;height:32.00px;background:#32483b;border:1.2px solid #2cc157;border-radius:5px;"></div>
<span class="t" style="top:302.00px;font-size:12px;color:#2fc65c;left:1651.50px;">N</span>
<span class="t" style="top:300.00px;font-size:10.8px;color:#2fc65c;left:1661.20px;">o</span>
<div class="a" style="left:1661.70px;top:310.70px;width:6.40px;height:1.10px;background:#2fc65c;"></div>
<span class="t" style="top:300.00px;font-size:16px;color:#fff;left:1675.00px;letter-spacing:-0.031px;">order_amt(SUM)</span>
<span class="t" style="top:370.00px;font-size:16px;color:#f2f2f2;left:1637.00px;letter-spacing:0.029px;">Category (Dim.)</span>
<span class="t" style="top:370.00px;font-size:16px;color:#d4d4d4;right:37.80px;word-spacing:0.6px;">1 / 1</span>
<svg class="a" style="left:1908.20px;top:370.20px;" width="14" height="14" viewBox="0 0 14 14"><path d="M13.80 7.00L13.61 7.58L13.08 8.07L12.36 8.44L11.63 8.68L11.05 8.89L10.72 9.15L10.66 9.56L10.77 10.17L10.92 10.92L10.97 11.73L10.80 12.43L10.40 12.89L9.80 13.01L9.11 12.80L8.44 12.36L7.86 11.85L7.39 11.45L7.00 11.30L6.61 11.45L6.14 11.85L5.56 12.36L4.89 12.80L4.20 13.01L3.60 12.89L3.20 12.43L3.03 11.73L3.08 10.92L3.23 10.17L3.34 9.56L3.28 9.15L2.95 8.89L2.37 8.68L1.64 8.44L0.92 8.07L0.39 7.58L0.20 7.00L0.39 6.42L0.92 5.93L1.64 5.56L2.37 5.32L2.95 5.11L3.28 4.85L3.34 4.44L3.23 3.83L3.08 3.08L3.03 2.27L3.20 1.57L3.60 1.11L4.20 0.99L4.89 1.20L5.56 1.64L6.14 2.15L6.61 2.55L7.00 2.70L7.39 2.55L7.86 2.15L8.44 1.64L9.11 1.20L9.80 0.99L10.40 1.11L10.80 1.57L10.97 2.27L10.92 3.08L10.77 3.83L10.66 4.44L10.72 4.85L11.05 5.11L11.63 5.32L12.36 5.56L13.08 5.93L13.61 6.42L13.80 7.00Z" fill="none" stroke="#bdbdbd" stroke-width="1.05" stroke-linejoin="round"/><circle cx="7" cy="7" r="2.1" fill="none" stroke="#bdbdbd" stroke-width="1.05"/></svg>
<svg class="a" style="left:1637.00px;top:399.40px;" width="286" height="43.5" viewBox="0 0 286 43.5"><rect x=".5" y=".5" width="285" height="42.5" rx="5" fill="#2f3036" stroke="#50525a" stroke-width="1" stroke-dasharray="3 2"/></svg>
<div class="a" style="left:1640.00px;top:402.00px;width:281.00px;height:32.00px;background:#323d59;border:1.4px solid #2e6df6;border-radius:5px;"></div>
<svg class="a" style="left:1653.00px;top:409.10px;" width="15" height="17" viewBox="0 0 15 17"><path d="M7.3 0.8C3.7 0.8 0.9 3.6 0.9 7.1C0.9 10.4 3.6 13.2 7.3 15.8C11 13.2 13.7 10.4 13.7 7.1C13.7 3.6 10.9 0.8 7.3 0.8Z" fill="none" stroke="#2e6df6" stroke-width="1.3" stroke-linejoin="round"/><circle cx="7.3" cy="6.9" r="2.3" fill="none" stroke="#2e6df6" stroke-width="1.3"/></svg>
<span class="t" style="top:411.00px;font-size:16px;color:#fff;left:1675.00px;transform:scaleX(0.9469);transform-origin:left center;">area</span>
<span class="t" style="top:480.00px;font-size:16px;color:#f2f2f2;left:1637.00px;letter-spacing:-0.021px;">Color (Dim. or Mea.)</span>
<span class="t" style="top:480.00px;font-size:16px;color:#d4d4d4;right:37.80px;word-spacing:0.6px;">1 / 1</span>
<svg class="a" style="left:1908.20px;top:480.70px;" width="14" height="14" viewBox="0 0 14 14"><path d="M13.80 7.00L13.61 7.58L13.08 8.07L12.36 8.44L11.63 8.68L11.05 8.89L10.72 9.15L10.66 9.56L10.77 10.17L10.92 10.92L10.97 11.73L10.80 12.43L10.40 12.89L9.80 13.01L9.11 12.80L8.44 12.36L7.86 11.85L7.39 11.45L7.00 11.30L6.61 11.45L6.14 11.85L5.56 12.36L4.89 12.80L4.20 13.01L3.60 12.89L3.20 12.43L3.03 11.73L3.08 10.92L3.23 10.17L3.34 9.56L3.28 9.15L2.95 8.89L2.37 8.68L1.64 8.44L0.92 8.07L0.39 7.58L0.20 7.00L0.39 6.42L0.92 5.93L1.64 5.56L2.37 5.32L2.95 5.11L3.28 4.85L3.34 4.44L3.23 3.83L3.08 3.08L3.03 2.27L3.20 1.57L3.60 1.11L4.20 0.99L4.89 1.20L5.56 1.64L6.14 2.15L6.61 2.55L7.00 2.70L7.39 2.55L7.86 2.15L8.44 1.64L9.11 1.20L9.80 0.99L10.40 1.11L10.80 1.57L10.97 2.27L10.92 3.08L10.77 3.83L10.66 4.44L10.72 4.85L11.05 5.11L11.63 5.32L12.36 5.56L13.08 5.93L13.61 6.42L13.80 7.00Z" fill="none" stroke="#bdbdbd" stroke-width="1.05" stroke-linejoin="round"/><circle cx="7" cy="7" r="2.1" fill="none" stroke="#bdbdbd" stroke-width="1.05"/></svg>
<svg class="a" style="left:1787.00px;top:480.10px;" width="14.4" height="14.4" viewBox="0 0 14.4 14.4"><circle cx="7.2" cy="7.2" r="6.6000000000000005" fill="none" stroke="#d0d0d0" stroke-width="1.1"/><rect x="6.6000000000000005" y="6.048" width="1.2" height="4.896000000000001" fill="#d0d0d0"/><rect x="6.5" y="3.456" width="1.4" height="1.4" fill="#d0d0d0"/></svg>
<svg class="a" style="left:1637.00px;top:510.40px;" width="286" height="43.5" viewBox="0 0 286 43.5"><rect x=".5" y=".5" width="285" height="42.5" rx="5" fill="#2f3036" stroke="#50525a" stroke-width="1" stroke-dasharray="3 2"/></svg>
<div class="a" style="left:1640.00px;top:512.40px;width:281.00px;height:32.00px;background:#323d59;border:1.4px solid #2e6df6;border-radius:5px;"></div>
<svg class="a" style="left:1653.00px;top:519.50px;" width="15" height="17" viewBox="0 0 15 17"><path d="M7.3 0.8C3.7 0.8 0.9 3.6 0.9 7.1C0.9 10.4 3.6 13.2 7.3 15.8C11 13.2 13.7 10.4 13.7 7.1C13.7 3.6 10.9 0.8 7.3 0.8Z" fill="none" stroke="#2e6df6" stroke-width="1.3" stroke-linejoin="round"/><circle cx="7.3" cy="6.9" r="2.3" fill="none" stroke="#2e6df6" stroke-width="1.3"/></svg>
<span class="t" style="top:521.00px;font-size:16px;color:#fff;left:1675.00px;transform:scaleX(0.9469);transform-origin:left center;">area</span>
<span class="t" style="top:591.00px;font-size:16px;color:#f2f2f2;left:1637.00px;letter-spacing:-0.118px;">Shape (Dim.)</span>
<span class="t" style="top:591.00px;font-size:16px;color:#d4d4d4;right:37.80px;word-spacing:0.6px;">0 / 1</span>
<svg class="a" style="left:1908.20px;top:591.70px;" width="14" height="14" viewBox="0 0 14 14"><path d="M13.80 7.00L13.61 7.58L13.08 8.07L12.36 8.44L11.63 8.68L11.05 8.89L10.72 9.15L10.66 9.56L10.77 10.17L10.92 10.92L10.97 11.73L10.80 12.43L10.40 12.89L9.80 13.01L9.11 12.80L8.44 12.36L7.86 11.85L7.39 11.45L7.00 11.30L6.61 11.45L6.14 11.85L5.56 12.36L4.89 12.80L4.20 13.01L3.60 12.89L3.20 12.43L3.03 11.73L3.08 10.92L3.23 10.17L3.34 9.56L3.28 9.15L2.95 8.89L2.37 8.68L1.64 8.44L0.92 8.07L0.39 7.58L0.20 7.00L0.39 6.42L0.92 5.93L1.64 5.56L2.37 5.32L2.95 5.11L3.28 4.85L3.34 4.44L3.23 3.83L3.08 3.08L3.03 2.27L3.20 1.57L3.60 1.11L4.20 0.99L4.89 1.20L5.56 1.64L6.14 2.15L6.61 2.55L7.00 2.70L7.39 2.55L7.86 2.15L8.44 1.64L9.11 1.20L9.80 0.99L10.40 1.11L10.80 1.57L10.97 2.27L10.92 3.08L10.77 3.83L10.66 4.44L10.72 4.85L11.05 5.11L11.63 5.32L12.36 5.56L13.08 5.93L13.61 6.42L13.80 7.00Z" fill="none" stroke="#bdbdbd" stroke-width="1.05" stroke-linejoin="round"/><circle cx="7" cy="7" r="2.1" fill="none" stroke="#bdbdbd" stroke-width="1.05"/></svg>
<svg class="a" style="left:1736.00px;top:591.10px;" width="14.4" height="14.4" viewBox="0 0 14.4 14.4"><circle cx="7.2" cy="7.2" r="6.6000000000000005" fill="none" stroke="#d0d0d0" stroke-width="1.1"/><rect x="6.6000000000000005" y="6.048" width="1.2" height="4.896000000000001" fill="#d0d0d0"/><rect x="6.5" y="3.456" width="1.4" height="1.4" fill="#d0d0d0"/></svg>
<svg class="a" style="left:1637.00px;top:621.00px;" width="286" height="37" viewBox="0 0 286 37"><rect x=".5" y=".5" width="285" height="36" rx="5" fill="#2f3036" stroke="#50525a" stroke-width="1" stroke-dasharray="3 2"/></svg>
<span class="t" style="top:632.00px;font-size:16px;color:#6f7178;left:1687.20px;letter-spacing:0.068px;">Drag and drop fields here.</span>
<span class="t" style="top:696.00px;font-size:16px;color:#f2f2f2;left:1637.00px;letter-spacing:-0.08px;">Size (Mea.)</span>
<span class="t" style="top:696.00px;font-size:16px;color:#d4d4d4;right:37.80px;word-spacing:0.6px;">1 / 1</span>
<svg class="a" style="left:1908.20px;top:696.20px;" width="14" height="14" viewBox="0 0 14 14"><path d="M13.80 7.00L13.61 7.58L13.08 8.07L12.36 8.44L11.63 8.68L11.05 8.89L10.72 9.15L10.66 9.56L10.77 10.17L10.92 10.92L10.97 11.73L10.80 12.43L10.40 12.89L9.80 13.01L9.11 12.80L8.44 12.36L7.86 11.85L7.39 11.45L7.00 11.30L6.61 11.45L6.14 11.85L5.56 12.36L4.89 12.80L4.20 13.01L3.60 12.89L3.20 12.43L3.03 11.73L3.08 10.92L3.23 10.17L3.34 9.56L3.28 9.15L2.95 8.89L2.37 8.68L1.64 8.44L0.92 8.07L0.39 7.58L0.20 7.00L0.39 6.42L0.92 5.93L1.64 5.56L2.37 5.32L2.95 5.11L3.28 4.85L3.34 4.44L3.23 3.83L3.08 3.08L3.03 2.27L3.20 1.57L3.60 1.11L4.20 0.99L4.89 1.20L5.56 1.64L6.14 2.15L6.61 2.55L7.00 2.70L7.39 2.55L7.86 2.15L8.44 1.64L9.11 1.20L9.80 0.99L10.40 1.11L10.80 1.57L10.97 2.27L10.92 3.08L10.77 3.83L10.66 4.44L10.72 4.85L11.05 5.11L11.63 5.32L12.36 5.56L13.08 5.93L13.61 6.42L13.80 7.00Z" fill="none" stroke="#bdbdbd" stroke-width="1.05" stroke-linejoin="round"/><circle cx="7" cy="7" r="2.1" fill="none" stroke="#bdbdbd" stroke-width="1.05"/></svg>
<svg class="a" style="left:1637.00px;top:725.00px;" width="286" height="43.5" viewBox="0 0 286 43.5"><rect x=".5" y=".5" width="285" height="42.5" rx="5" fill="#2f3036" stroke="#50525a" stroke-width="1" stroke-dasharray="3 2"/></svg>
<div class="a" style="left:1640.00px;top:728.00px;width:281.00px;height:32.00px;background:#32483b;border:1.2px solid #2cc157;border-radius:5px;"></div>
<span class="t" style="top:739.00px;font-size:12px;color:#2fc65c;left:1651.50px;">N</span>
<span class="t" style="top:737.00px;font-size:10.8px;color:#2fc65c;left:1661.20px;">o</span>
<div class="a" style="left:1661.70px;top:747.70px;width:6.40px;height:1.10px;background:#2fc65c;"></div>
<span class="t" style="top:737.00px;font-size:16px;color:#fff;left:1675.00px;letter-spacing:-0.044px;">order_number(SUM)</span>
<span class="t" style="top:807.00px;font-size:16px;color:#f2f2f2;left:1637.00px;letter-spacing:0.233px;">Playback axis/Time dimension</span>
<span class="t" style="top:807.00px;font-size:16px;color:#d4d4d4;right:37.80px;word-spacing:0.6px;">0 / 1</span>
<svg class="a" style="left:1908.20px;top:807.20px;" width="14" height="14" viewBox="0 0 14 14"><path d="M13.80 7.00L13.61 7.58L13.08 8.07L12.36 8.44L11.63 8.68L11.05 8.89L10.72 9.15L10.66 9.56L10.77 10.17L10.92 10.92L10.97 11.73L10.80 12.43L10.40 12.89L9.80 13.01L9.11 12.80L8.44 12.36L7.86 11.85L7.39 11.45L7.00 11.30L6.61 11.45L6.14 11.85L5.56 12.36L4.89 12.80L4.20 13.01L3.60 12.89L3.20 12.43L3.03 11.73L3.08 10.92L3.23 10.17L3.34 9.56L3.28 9.15L2.95 8.89L2.37 8.68L1.64 8.44L0.92 8.07L0.39 7.58L0.20 7.00L0.39 6.42L0.92 5.93L1.64 5.56L2.37 5.32L2.95 5.11L3.28 4.85L3.34 4.44L3.23 3.83L3.08 3.08L3.03 2.27L3.20 1.57L3.60 1.11L4.20 0.99L4.89 1.20L5.56 1.64L6.14 2.15L6.61 2.55L7.00 2.70L7.39 2.55L7.86 2.15L8.44 1.64L9.11 1.20L9.80 0.99L10.40 1.11L10.80 1.57L10.97 2.27L10.92 3.08L10.77 3.83L10.66 4.44L10.72 4.85L11.05 5.11L11.63 5.32L12.36 5.56L13.08 5.93L13.61 6.42L13.80 7.00Z" fill="none" stroke="#bdbdbd" stroke-width="1.05" stroke-linejoin="round"/><circle cx="7" cy="7" r="2.1" fill="none" stroke="#bdbdbd" stroke-width="1.05"/></svg>
<svg class="a" style="left:1637.00px;top:836.60px;" width="286" height="43.5" viewBox="0 0 286 43.5"><rect x=".5" y=".5" width="285" height="42.5" rx="5" fill="#2f3036" stroke="#50525a" stroke-width="1" stroke-dasharray="3 2"/></svg>
<div class="a" style="left:1640.00px;top:839.20px;width:281.00px;height:32.00px;background:#323d59;border:1.4px solid #2e6df6;border-radius:5px;"></div>
<svg class="a" style="left:1652.60px;top:847.20px;" width="16" height="16" viewBox="0 0 16 16"><rect x=".7" y="2.2" width="14.4" height="13" rx="1.4" fill="none" stroke="#2e6df6" stroke-width="1.3"/><path d="M4.6 0.4V3.8M11.2 0.4V3.8" stroke="#2e6df6" stroke-width="1.3"/><path d="M5.2 5.8L7.9 9.6L10.6 5.8M7.9 9.6V13.2" fill="none" stroke="#2e6df6" stroke-width="1.2"/></svg>
<span class="t" style="top:848.00px;font-size:16px;color:#fff;left:1675.00px;letter-spacing:-0.037px;">report_date(year)</span>
<span class="t" style="top:918.00px;font-size:16px;color:#f2f2f2;left:1637.00px;letter-spacing:0.077px;">Tooltip (Item)</span>
<span class="t" style="top:918.00px;font-size:16px;color:#d4d4d4;right:37.80px;word-spacing:0.6px;">1 / 5</span>
<svg class="a" style="left:1908.20px;top:918.20px;" width="14" height="14" viewBox="0 0 14 14"><path d="M13.80 7.00L13.61 7.58L13.08 8.07L12.36 8.44L11.63 8.68L11.05 8.89L10.72 9.15L10.66 9.56L10.77 10.17L10.92 10.92L10.97 11.73L10.80 12.43L10.40 12.89L9.80 13.01L9.11 12.80L8.44 12.36L7.86 11.85L7.39 11.45L7.00 11.30L6.61 11.45L6.14 11.85L5.56 12.36L4.89 12.80L4.20 13.01L3.60 12.89L3.20 12.43L3.03 11.73L3.08 10.92L3.23 10.17L3.34 9.56L3.28 9.15L2.95 8.89L2.37 8.68L1.64 8.44L0.92 8.07L0.39 7.58L0.20 7.00L0.39 6.42L0.92 5.93L1.64 5.56L2.37 5.32L2.95 5.11L3.28 4.85L3.34 4.44L3.23 3.83L3.08 3.08L3.03 2.27L3.20 1.57L3.60 1.11L4.20 0.99L4.89 1.20L5.56 1.64L6.14 2.15L6.61 2.55L7.00 2.70L7.39 2.55L7.86 2.15L8.44 1.64L9.11 1.20L9.80 0.99L10.40 1.11L10.80 1.57L10.97 2.27L10.92 3.08L10.77 3.83L10.66 4.44L10.72 4.85L11.05 5.11L11.63 5.32L12.36 5.56L13.08 5.93L13.61 6.42L13.80 7.00Z" fill="none" stroke="#bdbdbd" stroke-width="1.05" stroke-linejoin="round"/><circle cx="7" cy="7" r="2.1" fill="none" stroke="#bdbdbd" stroke-width="1.05"/></svg>
<svg class="a" style="left:1637.00px;top:947.60px;" width="286" height="43.5" viewBox="0 0 286 43.5"><rect x=".5" y=".5" width="285" height="42.5" rx="5" fill="#2f3036" stroke="#50525a" stroke-width="1" stroke-dasharray="3 2"/></svg>
<div class="a" style="left:1640.00px;top:950.00px;width:281.00px;height:32.00px;background:#32483b;border:1.2px solid #2cc157;border-radius:5px;"></div>
<span class="t" style="top:961.00px;font-size:12px;color:#2fc65c;left:1651.50px;">N</span>
<span class="t" style="top:959.00px;font-size:10.8px;color:#2fc65c;left:1661.20px;">o</span>
<div class="a" style="left:1661.70px;top:969.70px;width:6.40px;height:1.10px;background:#2fc65c;"></div>
<span class="t" style="top:959.00px;font-size:16px;color:#fff;left:1675.00px;letter-spacing:0.106px;">shipping_cost(SUM)</span>
<svg class="a" style="left:0.00px;top:0.00px;" width="1938" height="1082" viewBox="0 0 1938 1082"><rect x="1632.65" y="796.85" width="298.7" height="90.2" fill="none" stroke="#ff5c4c" stroke-width="5.4"/></svg>
<svg class="a" style="left:1550.00px;top:830.00px;" width="76" height="40" viewBox="0 0 76 40"><path d="M4.5 19.8L34 5L27.6 15H66.4A4.9 4.9 0 0 1 66.4 24.8H27.6L34 35.2Z" fill="#ff5c4c"/></svg>
</div></body></html>
